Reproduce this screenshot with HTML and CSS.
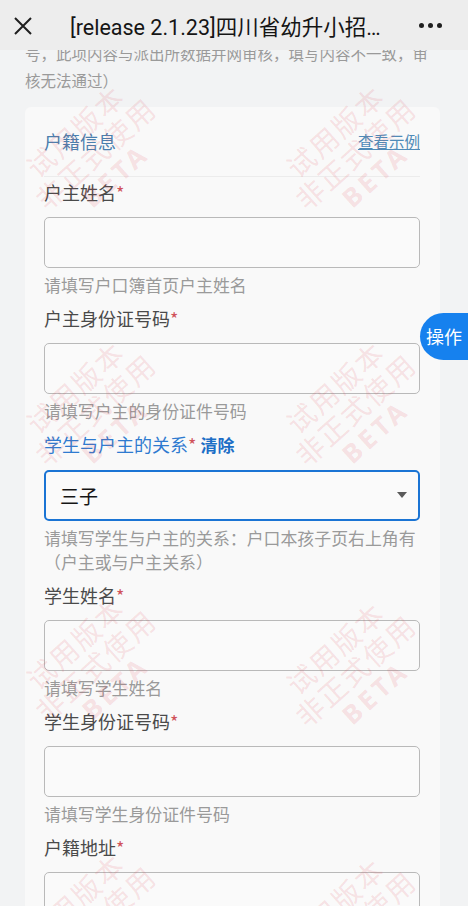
FILE: index.html
```html
<!DOCTYPE html>
<html lang="zh-CN">
<head>
<meta charset="utf-8">
<title>四川省幼升小招生</title>
<link rel="stylesheet" href="styles.css">
</head>
<body>
<header class="nav">
  <svg class="nav-close" width="20" height="20" viewBox="0 0 20 20"><path d="M2 2L18 18M18 2L2 18" stroke="#1f1f1f" stroke-width="2" fill="none"/></svg>
  <div class="nav-title">[release 2.1.23]四川省幼升小招…</div>
  <div class="nav-more"><span></span><span></span><span></span></div>
</header>
<main class="page">
  <p class="intro"><span class="intro-line">号，此项内容与派出所数据并网审核，填写内容不一致，审</span><br>核无法通过）</p>
  <section class="card">
    <div class="card-head">
      <h2 class="card-title">户籍信息</h2>
      <a class="card-link">查看示例</a>
    </div>
    <div class="field">
      <label class="label">户主姓名<span class="req">*</span></label>
      <div class="input"></div>
      <p class="help">请填写户口簿首页户主姓名</p>
    </div>
    <div class="field">
      <label class="label">户主身份证号码<span class="req">*</span></label>
      <div class="input"></div>
      <p class="help">请填写户主的身份证件号码</p>
    </div>
    <div class="field">
      <label class="label label-active">学生与户主的关系<span class="req">*</span> <span class="clear">清除</span></label>
      <div class="input select"><span class="select-value">三子</span><span class="caret"></span></div>
      <p class="help">请填写学生与户主的关系：户口本孩子页右上角有<br>（户主或与户主关系）</p>
    </div>
    <div class="field">
      <label class="label">学生姓名<span class="req">*</span></label>
      <div class="input"></div>
      <p class="help">请填写学生姓名</p>
    </div>
    <div class="field">
      <label class="label">学生身份证号码<span class="req">*</span></label>
      <div class="input"></div>
      <p class="help">请填写学生身份证件号码</p>
    </div>
    <div class="field">
      <label class="label">户籍地址<span class="req">*</span></label>
      <div class="input"></div>
    </div>
  </section>
</main>
<div class="fab">操作</div>
<div class="watermarks">
  <div class="wm wm-a1"><span>试用版本</span><span>非正式使用</span><b>BETA</b></div>
  <div class="wm wm-b1"><span>试用版本</span><span>非正式使用</span><b>BETA</b></div>
  <div class="wm wm-a2"><span>试用版本</span><span>非正式使用</span><b>BETA</b></div>
  <div class="wm wm-b2"><span>试用版本</span><span>非正式使用</span><b>BETA</b></div>
  <div class="wm wm-a3"><span>试用版本</span><span>非正式使用</span><b>BETA</b></div>
  <div class="wm wm-b3"><span>试用版本</span><span>非正式使用</span><b>BETA</b></div>
  <div class="wm wm-a4"><span>试用版本</span><span>非正式使用</span><b>BETA</b></div>
  <div class="wm wm-b4"><span>试用版本</span><span>非正式使用</span><b>BETA</b></div>
</div>
</body>
</html>
```
FILE: styles.css
```css
* { box-sizing: border-box; }
html, body {
  margin: 0;
  padding: 0;
  height: 906px;
  overflow: hidden;
}
body {
  background: #f2f3f4;
  font-family: Roboto, "Noto Sans", "Noto Sans CJK SC", sans-serif;
  color: #333;
  position: relative;
}
.nav {
  height: 50px;
  background: #ededed;
  display: flex;
  align-items: center;
  padding: 0 0 0 13px;
  position: relative;
  z-index: 2;
}
.nav-close { flex: none; margin-top: 2px; }
.nav-title {
  margin-left: 37px;
  font-size: 21.5px;
  color: #151515;
  white-space: nowrap;
  flex: 1;
  font-family: Roboto, "Noto Sans CJK SC", sans-serif;
}
.nav-more {
  display: flex;
  gap: 4px;
  margin-right: 26px;
}
.nav-more span {
  width: 5px;
  height: 5px;
  border-radius: 50%;
  background: #1f1f1f;
}
.page {
  padding: 0 28px 0 25px;
  height: 856px;
  overflow: hidden;
}
.intro {
  margin: -10.5px 0 13px;
  font-size: 15.5px;
  line-height: 27px;
  color: #9a9a9a;
  font-family: "Noto Sans CJK SC", sans-serif;
  white-space: nowrap;
}
.card {
  background: #f9f9f9;
  border-radius: 6px;
  padding: 21px 20px 0 19px;
  font-family: "Noto Sans CJK SC", sans-serif;
}
.card-head {
  display: flex;
  justify-content: space-between;
  align-items: center;
  padding-bottom: 22px;
  border-bottom: 1px solid #ececec;
  margin-bottom: 2px;
}
.card-title {
  margin: 0;
  font-size: 18px;
  line-height: 26px;
  font-weight: 400;
  color: #4a7fae;
}
.card-link {
  font-size: 15.5px;
  line-height: 24px;
  color: #4f8bb8;
  text-decoration: underline;
}
.field { margin-bottom: 8px; }
.label {
  display: block;
  font-size: 18px;
  line-height: 26px;
  color: #4a4a4a;
  margin-bottom: 12px;
}
.label-active { color: #2f7bd0; }
.req { color: #d0535b; }
.clear { color: #1c6ec6; font-weight: 700; font-size: 17px; }
.input {
  height: 51px;
  border: 1px solid #b9b9b9;
  border-radius: 5px;
  background: #fafafa;
}
.select {
  border: 2px solid #1a74d4;
  display: flex;
  align-items: center;
  justify-content: space-between;
  padding: 0 11px 0 14px;
}
.select-value {
  font-size: 19px;
  color: #151515;
}
.caret {
  width: 0;
  height: 0;
  border-left: 5px solid transparent;
  border-right: 5px solid transparent;
  border-top: 6px solid #5a5a5a;
}
.help {
  margin: 5px 0 0;
  font-size: 16.9px;
  line-height: 24px;
  color: #9a9a9a;
  white-space: nowrap;
}
.fab {
  position: absolute;
  right: 0;
  top: 313px;
  width: 48px;
  height: 47px;
  border-radius: 24px 0 0 24px;
  background: #1681ee;
  color: #fff;
  font-size: 18px;
  line-height: 47px;
  padding-left: 6px;
  font-family: "Noto Sans CJK SC", sans-serif;
  z-index: 3;
}
.watermarks {
  position: absolute;
  inset: 0;
  pointer-events: none;
  z-index: 1;
  overflow: hidden;
}
.wm {
  position: absolute;
  width: 200px;
  display: flex;
  flex-direction: column;
  align-items: center;
  transform: translate(-50%, -50%) rotate(-42deg);
  color: rgba(225, 70, 85, 0.15);
  font-family: "Noto Sans CJK SC", sans-serif;
  font-size: 28px;
  line-height: 30px;
  letter-spacing: 2px;
}
.wm b { font-family: "Noto Sans", sans-serif; font-weight: 700; font-size: 26px; letter-spacing: 4px; }
.wm-a1 { left: 95px; top: 153px; }
.wm-b1 { left: 355px; top: 153px; }
.wm-a2 { left: 95px; top: 409px; }
.wm-b2 { left: 355px; top: 409px; }
.wm-a3 { left: 95px; top: 665px; }
.wm-b3 { left: 355px; top: 670px; }
.wm-a4 { left: 95px; top: 921px; }
.wm-b4 { left: 355px; top: 926px; }
```
